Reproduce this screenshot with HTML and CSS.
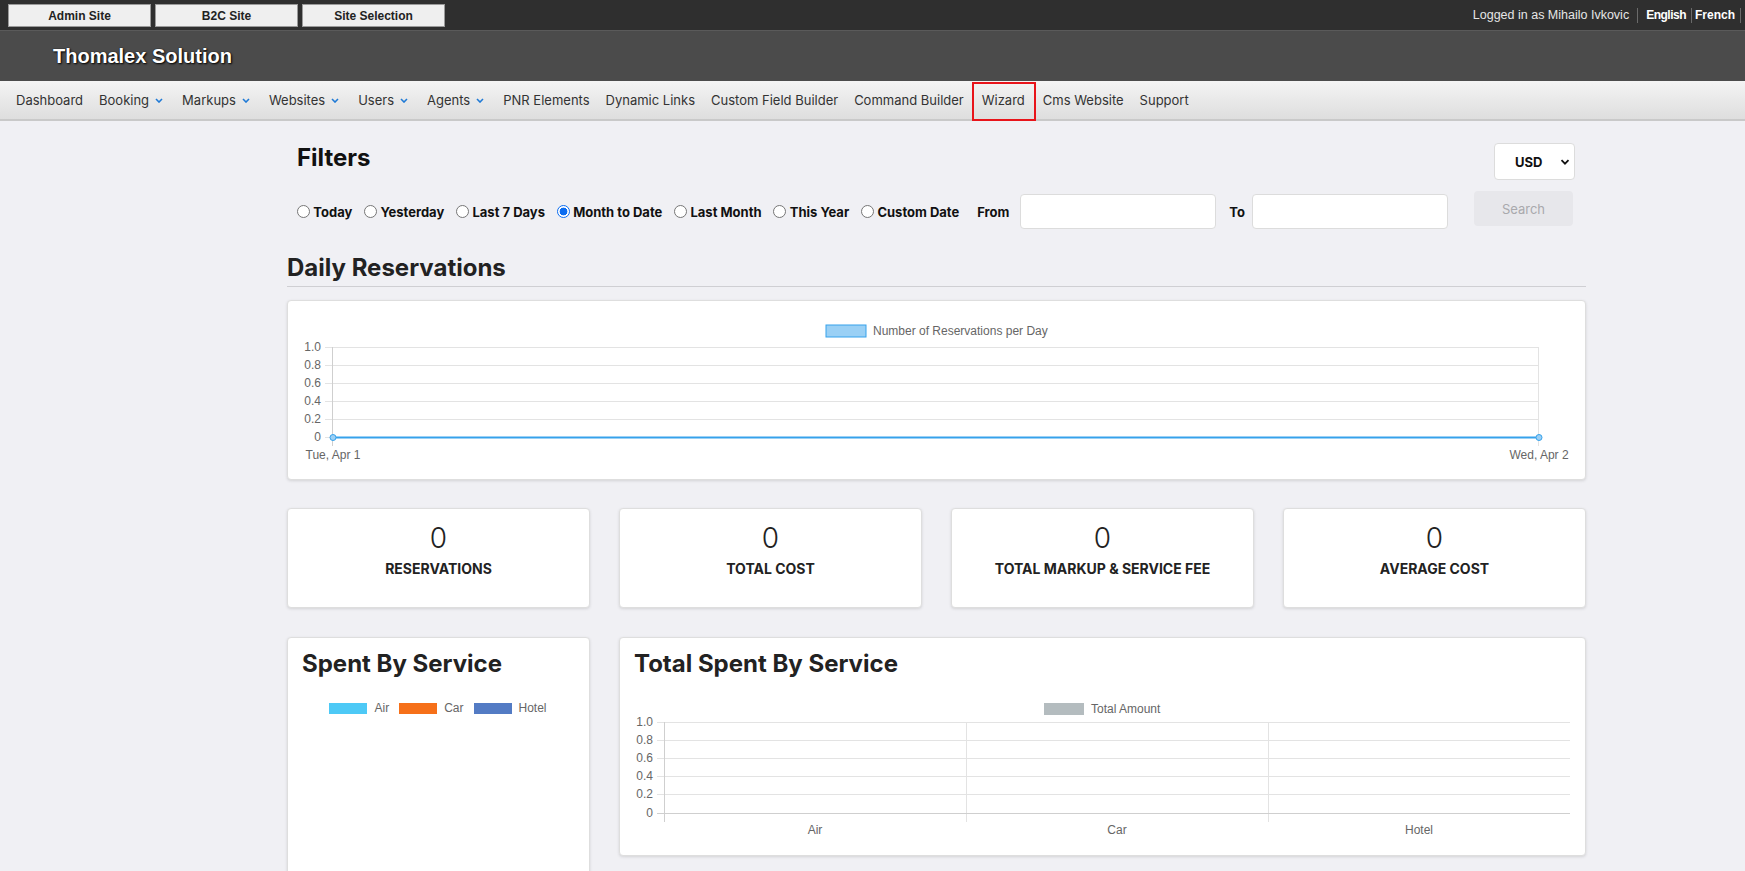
FILE: index.html
```html
<!DOCTYPE html>
<html lang="en">
<head>
<meta charset="utf-8">
<title>Thomalex Solution - Dashboard</title>
<link rel="stylesheet" href="styles.css">
</head>
<body>
<div class="topbar">
  <div class="top-left">
    <button class="topbtn">Admin Site</button>
    <button class="topbtn">B2C Site</button>
    <button class="topbtn">Site Selection</button>
  </div>
  <div class="top-right">
    <span class="logged">Logged in as Mihailo Ivkovic</span>
    <span class="sep sep-a"></span>
    <span class="lang lang-en">English</span>
    <span class="sep sep-b"></span>
    <span class="lang">French</span>
    <span class="sep sep-c"></span>
  </div>
</div>
<div class="brand"><span class="brand-name">Thomalex Solution</span></div>
<nav class="nav">
  <span class="nav-item">Dashboard</span>
  <span class="nav-item">Booking<svg class="chev" viewBox="0 0 8 5"><path d="M1 1l3 3 3-3"/></svg></span>
  <span class="nav-item">Markups<svg class="chev" viewBox="0 0 8 5"><path d="M1 1l3 3 3-3"/></svg></span>
  <span class="nav-item">Websites<svg class="chev" viewBox="0 0 8 5"><path d="M1 1l3 3 3-3"/></svg></span>
  <span class="nav-item">Users<svg class="chev" viewBox="0 0 8 5"><path d="M1 1l3 3 3-3"/></svg></span>
  <span class="nav-item">Agents<svg class="chev" viewBox="0 0 8 5"><path d="M1 1l3 3 3-3"/></svg></span>
  <span class="nav-item">PNR Elements</span>
  <span class="nav-item">Dynamic Links</span>
  <span class="nav-item">Custom Field Builder</span>
  <span class="nav-item">Command Builder</span>
  <span class="nav-item nav-marked">Wizard</span>
  <span class="nav-item">Cms Website</span>
  <span class="nav-item">Support</span>
</nav>

<main class="main">
  <section class="filters">
    <div class="filters-head">
      <h1 class="filters-title">Filters</h1>
      <div class="select">USD<svg class="select-chev" viewBox="0 0 10 6"><path d="M1.5 1.2l3.5 3.5 3.5-3.5"/></svg></div>
    </div>
    <div class="filters-row">
      <label class="radio"><span class="dot"></span>Today</label>
      <label class="radio"><span class="dot"></span>Yesterday</label>
      <label class="radio"><span class="dot"></span>Last 7 Days</label>
      <label class="radio"><span class="dot on"></span>Month to Date</label>
      <label class="radio"><span class="dot"></span>Last Month</label>
      <label class="radio"><span class="dot"></span>This Year</label>
      <label class="radio"><span class="dot"></span>Custom Date</label>
      <span class="field-label from">From</span>
      <span class="text-input"></span>
      <span class="field-label to">To</span>
      <span class="text-input"></span>
      <button class="search">Search</button>
    </div>
  </section>

  <h2 class="section-title">Daily Reservations</h2>
  <div class="card chart-card">
    <svg class="chart" width="1297" height="178" viewBox="0 0 1297 178">
      <rect x="538" y="24" width="40" height="12" fill="rgba(54,162,235,0.5)" stroke="#36a2eb" stroke-width="1"/>
      <text x="585" y="34" class="ct">Number of Reservations per Day</text>
      <g stroke="#e3e3e3" stroke-width="1">
        <line x1="37" y1="46.5" x2="1251" y2="46.5"/>
        <line x1="37" y1="64.5" x2="1251" y2="64.5"/>
        <line x1="37" y1="82.5" x2="1251" y2="82.5"/>
        <line x1="37" y1="100.5" x2="1251" y2="100.5"/>
        <line x1="37" y1="118.5" x2="1251" y2="118.5"/>
        <line x1="37" y1="136.5" x2="1251" y2="136.5"/>
        <line x1="1250.5" y1="46" x2="1250.5" y2="145"/>
      </g>
      <line x1="44.5" y1="46" x2="44.5" y2="145" stroke="#cfcfcf"/>
      <g class="ct" text-anchor="end">
        <text x="33" y="50">1.0</text>
        <text x="33" y="68">0.8</text>
        <text x="33" y="86">0.6</text>
        <text x="33" y="104">0.4</text>
        <text x="33" y="122">0.2</text>
        <text x="33" y="140">0</text>
      </g>
      <line x1="45" y1="136.5" x2="1251" y2="136.5" stroke="#36a2eb" stroke-width="2"/>
      <circle cx="45" cy="136.5" r="3" fill="#9dd0f5" stroke="#36a2eb"/>
      <circle cx="1251" cy="136.5" r="3" fill="#9dd0f5" stroke="#36a2eb"/>
      <text x="45" y="158" class="ct" text-anchor="middle">Tue, Apr 1</text>
      <text x="1251" y="158" class="ct" text-anchor="middle">Wed, Apr 2</text>
    </svg>
  </div>

  <div class="stats">
    <div class="card stat"><div class="stat-num">0</div><div class="stat-label">RESERVATIONS</div></div>
    <div class="card stat"><div class="stat-num">0</div><div class="stat-label">TOTAL COST</div></div>
    <div class="card stat"><div class="stat-num">0</div><div class="stat-label">TOTAL MARKUP &amp; SERVICE FEE</div></div>
    <div class="card stat"><div class="stat-num">0</div><div class="stat-label">AVERAGE COST</div></div>
  </div>

  <div class="bottom">
    <div class="card service-card">
      <h3 class="card-title">Spent By Service</h3>
      <div class="legend">
        <span class="leg"><span class="leg-box air"></span>Air</span>
        <span class="leg"><span class="leg-box car"></span>Car</span>
        <span class="leg"><span class="leg-box hotel"></span>Hotel</span>
      </div>
    </div>
    <div class="card total-card">
      <h3 class="card-title">Total Spent By Service</h3>
      <svg class="chart" width="965" height="177" viewBox="0 0 965 177">
        <rect x="424" y="26" width="40" height="12" fill="#b4bcbf"/>
        <text x="471" y="36" class="ct">Total Amount</text>
        <g stroke="#e3e3e3" stroke-width="1">
          <line x1="37" y1="45.5" x2="950" y2="45.5"/>
          <line x1="37" y1="63.5" x2="950" y2="63.5"/>
          <line x1="37" y1="81.5" x2="950" y2="81.5"/>
          <line x1="37" y1="99.5" x2="950" y2="99.5"/>
          <line x1="37" y1="117.5" x2="950" y2="117.5"/>
          <line x1="346.5" y1="45" x2="346.5" y2="145"/>
          <line x1="648.5" y1="45" x2="648.5" y2="145"/>
        </g>
        <line x1="37" y1="136.5" x2="950" y2="136.5" stroke="#cfcfcf"/>
        <line x1="44.5" y1="45" x2="44.5" y2="145" stroke="#cfcfcf"/>
        <g class="ct" text-anchor="end">
          <text x="33" y="49">1.0</text>
          <text x="33" y="67">0.8</text>
          <text x="33" y="85">0.6</text>
          <text x="33" y="103">0.4</text>
          <text x="33" y="121">0.2</text>
          <text x="33" y="140">0</text>
        </g>
        <g class="ct" text-anchor="middle">
          <text x="195" y="157">Air</text>
          <text x="497" y="157">Car</text>
          <text x="799" y="157">Hotel</text>
        </g>
      </svg>
    </div>
  </div>
</main>
</body>
</html>
```

FILE: styles.css
```css
* { box-sizing: border-box; }
html, body { margin: 0; padding: 0; }
body {
  background: #f0f0f4;
  font-family: Inter, "Noto Sans", Arial, sans-serif;
  color: #222;
  overflow: hidden;
}

/* top bar */
.topbar {
  height: 31px;
  background: #2f2f2f;
  border-bottom: 1px solid #5a5a5a;
  display: flex;
  justify-content: space-between;
  align-items: center;
  padding: 0 0 0 8px;
}
.top-left { display: flex; gap: 4px; align-items: center; padding-top: 1px; }
.topbtn {
  width: 143px;
  height: 23px;
  background: #efefef;
  border: 1px solid #9a9a9a;
  border-radius: 0;
  font-family: "Liberation Sans", Arial, sans-serif;
  font-weight: bold;
  font-size: 12px;
  color: #222;
  padding: 0;
}
.top-right {
  display: flex;
  align-items: center;
  font-family: "Liberation Sans", Arial, sans-serif;
  font-size: 12.5px;
  color: #e6e6e6;
}
.top-right .lang { font-weight: bold; color: #fff; font-size: 12px; }
.top-right .lang-en { letter-spacing: -0.5px; }
.sep {
  display: inline-block;
  width: 1px;
  height: 15px;
  background: #6a6a6a;
}
.sep-a { margin: 0 8px 0 8px; }
.sep-b { margin: 0 3px 0 5px; }
.sep-c { margin: 0 4px 0 5px; }

/* brand */
.brand {
  height: 50px;
  background: #4b4b4b;
  display: flex;
  align-items: center;
  padding-left: 53px;
}
.brand-name {
  font-family: "Liberation Sans", Arial, sans-serif;
  font-weight: bold;
  font-size: 20px;
  color: #fff;
  text-shadow: 1px 1px 2px #000, 0 0 1px #000;
}

/* nav */
.nav {
  height: 40px;
  background: linear-gradient(#f4f4f4, #dedede);
  border-bottom: 2px solid #c9c9c9;
  display: flex;
  align-items: center;
  padding-left: 8px;
  font-size: 13px;
  color: #333;
}
.nav-item {
  position: relative;
  padding: 0 8px;
  display: flex;
  align-items: center;
  height: 100%;
  white-space: nowrap;
}
.chev {
  width: 8px;
  height: 5px;
  margin-left: 6px;
  margin-right: 3px;
  fill: none;
  stroke: #1f7ad6;
  stroke-width: 1.6;
}
.nav-marked { margin: 0 2px; }
.nav-marked::after {
  content: "";
  position: absolute;
  left: -2px;
  right: -3px;
  top: 1px;
  bottom: -2px;
  border: 2px solid #e8141a;
}

/* main */
.main {
  margin-left: 287px;
  width: 1299px;
}
.filters { padding: 22px 11px 0 10px; }
.filters-head {
  display: flex;
  justify-content: space-between;
  align-items: flex-start;
}
.filters-title {
  margin: 0;
  font-size: 24px;
  line-height: 30px;
  font-weight: 700;
  color: #111;
}
.select {
  width: 81px;
  height: 37px;
  background: #fff;
  border: 1px solid #dcdcdc;
  border-radius: 4px;
  display: flex;
  align-items: center;
  padding-left: 20px;
  font-size: 13px;
  font-weight: 700;
  color: #111;
}
.select-chev {
  width: 10px;
  height: 6px;
  margin-left: 18px;
  fill: none;
  stroke: #111;
  stroke-width: 1.8;
}
.filters-row {
  display: flex;
  align-items: center;
  height: 35px;
  margin-top: 14px;
  font-size: 13px;
  font-weight: 700;
  color: #111;
}
.radio {
  display: flex;
  align-items: center;
  margin-right: 11.9px;
  white-space: nowrap;
}
.dot {
  width: 13px;
  height: 13px;
  border: 1px solid #767676;
  border-radius: 50%;
  background: #fff;
  margin-right: 3.3px;
  display: inline-block;
}
.dot.on {
  border: 1px solid #0b6cf0;
  background: radial-gradient(circle, #0b6cf0 0 3.6px, #fff 4.2px);
}
.field-label { white-space: nowrap; }
.field-label.from { margin-left: 6px; margin-right: 11px; }
.field-label.to { margin-left: 13px; margin-right: 7px; }
.text-input {
  width: 196px;
  height: 35px;
  background: #fff;
  border: 1px solid #dcdcdc;
  border-radius: 4px;
  display: inline-block;
}
.search {
  margin-left: auto;
  margin-right: 2px;
  align-self: flex-start;
  margin-top: -3px;
  width: 99px;
  height: 35px;
  background: #e7e7eb;
  border: none;
  border-radius: 4px;
  color: #a9a9ad;
  font-family: Inter, sans-serif;
  font-size: 13px;
}

.section-title {
  margin: 24px 0 0;
  font-size: 24px;
  line-height: 30px;
  font-weight: 700;
  color: #222;
  padding-bottom: 3px;
  border-bottom: 1px solid #cfcfd3;
}

.card {
  background: #fff;
  border: 1px solid #dedede;
  border-radius: 4px;
  box-shadow: 0 1px 3px rgba(0,0,0,0.12);
}
.chart { display: block; }
.ct {
  font-family: "Liberation Sans", Arial, sans-serif;
  font-size: 12px;
  fill: #666;
}
.chart-card { margin-top: 13px; height: 180px; }

.stats {
  display: grid;
  grid-template-columns: repeat(4, 1fr);
  gap: 29px;
  margin-top: 28px;
}
.stat {
  height: 100px;
  text-align: center;
  padding-top: 14px;
}
.stat-num {
  font-size: 28px;
  line-height: 30px;
  font-weight: 300;
  color: #222;
}
.stat-label {
  margin-top: 8px;
  font-size: 14px;
  line-height: 16px;
  font-weight: 700;
  color: #222;
}

.bottom {
  display: grid;
  grid-template-columns: 303px 1fr;
  gap: 29px;
  margin-top: 29px;
  align-items: start;
}
.card-title {
  margin: 0;
  padding: 11px 14px 0;
  font-size: 24px;
  line-height: 30px;
  font-weight: 700;
  color: #222;
}
.service-card { height: 260px; }
.total-card { height: 219px; }
.total-card .chart { margin-top: -2px; }
.legend {
  display: flex;
  justify-content: center;
  gap: 10px;
  margin-top: 23px;
  font-family: "Liberation Sans", Arial, sans-serif;
  font-size: 12px;
  color: #666;
  padding-right: 1px;
}
.leg { display: flex; align-items: center; gap: 7px; line-height: 12px; }
.leg-box { width: 38px; height: 11px; display: inline-block; }
.leg-box.air { background: #4dc9f6; }
.leg-box.car { background: #f67019; }
.leg-box.hotel { background: #537bc4; }
```
